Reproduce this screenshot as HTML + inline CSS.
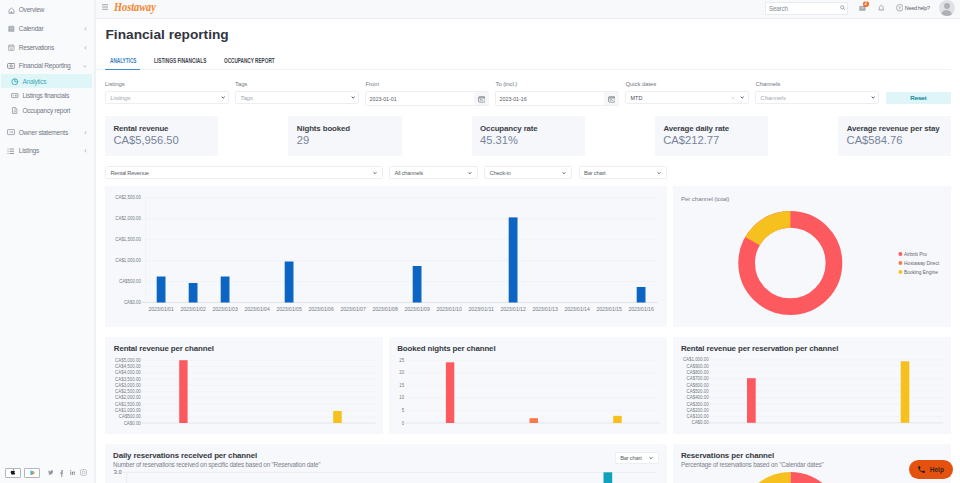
<!DOCTYPE html>
<html><head><meta charset="utf-8">
<style>
*{box-sizing:border-box;margin:0;padding:0}
html,body{width:960px;height:483px;overflow:hidden;background:#fff;font-family:"Liberation Sans",sans-serif;color:#333}
.a{position:absolute}
.t{position:absolute;white-space:nowrap}
/* sidebar */
#sb{left:0;top:0;width:96px;height:483px;background:#f9fafc;border-right:2px solid #f0f1f4}
.si{position:absolute;left:0;width:95px;height:14px;line-height:14px;font-size:6.6px;letter-spacing:-.27px;color:#727884}
.si span{position:absolute;left:18.75px}
.si.sub span{left:22.4px}
.si svg{position:absolute}
.chev{position:absolute;left:83px;font-size:6px;color:#9aa0a8}
/* header */
#hd{left:96px;top:0;width:864px;height:19px;background:#f8f9fb;border-bottom:1px solid #eceef2}
/* inputs */
.lbl{position:absolute;font-size:6px;letter-spacing:-.1px;color:#747983;line-height:8px;height:8px}
.inp{position:absolute;top:91px;height:13.5px;background:#fff;border:1px solid #e8ebf1;border-radius:1.5px}
.ph{position:absolute;font-size:6.2px;letter-spacing:-.1px;color:#a3a7af;font-style:italic}
.dd{position:absolute;right:5px;top:4px;width:4px;height:4px}
.card{position:absolute;top:116px;width:113.3px;height:40px;background:#f6f7fb}
.card .ct{position:absolute;left:8.5px;top:8.2px;font-size:7.9px;letter-spacing:-.12px;font-weight:bold;color:#3b3e46;line-height:10px;white-space:nowrap}
.card .cv{position:absolute;left:8.4px;top:17px;font-size:11.2px;color:#76839a;line-height:14px;white-space:nowrap}
.sel{position:absolute;top:166px;height:12.7px;background:#fff;border:1px solid #eceef3;border-radius:1.5px}
.sel span{position:absolute;left:4.6px;top:.6px;line-height:10.5px;font-size:5.8px;letter-spacing:-.24px;color:#5a5f68;white-space:nowrap}
.pan{position:absolute;background:#f7f8fc}
.ptl{position:absolute;font-size:7.6px;font-weight:bold;color:#353841;line-height:10px;white-space:nowrap}
.ax{font-size:4.4px;color:#6e737c;position:absolute;white-space:nowrap;line-height:6px}
</style></head><body>

<!-- SIDEBAR -->
<div id="sb" class="a">
  <div class="si" style="top:3.1px">
    <svg style="left:7.8px;top:4px" width="7" height="7" viewBox="0 0 14 14"><path d="M2 6.5 L7 2 L12 6.5 V12.5 H2 Z" fill="none" stroke="#7d838c" stroke-width="1.4" stroke-linejoin="round"/><path d="M6 12.5v-3h2v3" fill="none" stroke="#7d838c" stroke-width="1.2"/></svg>
    <span>Overview</span></div>
  <div class="si" style="top:21.7px">
    <svg style="left:8.2px;top:3.4px" width="6.6" height="7" viewBox="0 0 13 14"><rect x="0.5" y="2.5" width="12" height="11" rx="1" fill="#a3a8b0"/><path d="M4.5 2.5v11M8.5 2.5v11M.5 7h12" stroke="#d3d6db" stroke-width=".9"/><rect x="2.8" y="0.5" width="1.6" height="3" fill="#a3a8b0"/><rect x="8.6" y="0.5" width="1.6" height="3" fill="#a3a8b0"/></svg>
    <span>Calendar</span><svg class="chev" style="left:83.6px;top:5.3px" width="3" height="3.6" viewBox="0 0 6 7"><path d="M4.8 .8L1.6 3.5l3.2 2.7" fill="none" stroke="#8a9099" stroke-width="1.1"/></svg></div>
  <div class="si" style="top:40.8px">
    <svg style="left:8.2px;top:2.8px" width="6.6" height="7" viewBox="0 0 13 14"><rect x="1" y="2.5" width="11" height="10.5" rx="1" fill="none" stroke="#9a9fa7" stroke-width="1.4"/><path d="M1 5.5h11M3.8 .5v3.5M9.2 .5v3.5" stroke="#9a9fa7" stroke-width="1.4"/><path d="M4.5 8h4v3h-4z" fill="none" stroke="#9a9fa7" stroke-width="1"/></svg>
    <span>Reservations</span><svg class="chev" style="left:83.6px;top:5.3px" width="3" height="3.6" viewBox="0 0 6 7"><path d="M4.8 .8L1.6 3.5l3.2 2.7" fill="none" stroke="#8a9099" stroke-width="1.1"/></svg></div>
  <div class="si" style="top:59.3px">
    <svg style="left:6.7px;top:4.1px" width="8.4" height="5.8" viewBox="0 0 17 12"><rect x="1" y="1" width="15" height="10" rx="2" fill="none" stroke="#7b818a" stroke-width="1.8"/><circle cx="8.5" cy="6" r="2.4" fill="none" stroke="#7b818a" stroke-width="1.6"/><path d="M3.8 6h.8M12.4 6h.8" stroke="#7b818a" stroke-width="1.6"/></svg>
    <span>Financial Reporting</span><svg class="chev" style="left:83px;top:5.8px" width="3.6" height="3" viewBox="0 0 7 6"><path d="M.8 1.2l2.7 3.2 2.7-3.2" fill="none" stroke="#8a9099" stroke-width="1.1"/></svg></div>
  <div class="a" style="left:1px;top:73.8px;width:91px;height:14.6px;background:#dff6f9"></div>
  <div class="si sub" style="top:74.6px;color:#46abb9">
    <svg style="left:11.2px;top:3.2px" width="7.6" height="7.6" viewBox="0 0 14 14"><circle cx="7" cy="7" r="5.5" fill="none" stroke="#3aa8b8" stroke-width="1.6"/><path d="M7 1.5V7h5.5" fill="none" stroke="#3aa8b8" stroke-width="1.6"/></svg>
    <span>Analytics</span></div>
  <div class="si sub" style="top:89.1px">
    <svg style="left:11.2px;top:4.4px" width="7.6" height="5.2" viewBox="0 0 15 10"><rect x="1" y="1" width="13" height="8" rx="1" fill="none" stroke="#8d939b" stroke-width="1.5"/><path d="M3.5 5h2.5M9 3.5v3" stroke="#8d939b" stroke-width="1.4"/><circle cx="10.5" cy="5" r="1.4" fill="none" stroke="#8d939b" stroke-width="1"/></svg>
    <span>Listings financials</span></div>
  <div class="si sub" style="top:103.8px">
    <svg style="left:12.2px;top:3.1px" width="5.4" height="7" viewBox="0 0 11 14"><path d="M1 1h5.5L10 4.5V13H1z" fill="none" stroke="#8d939b" stroke-width="1.5" stroke-linejoin="round"/><path d="M6.5 1v3.5H10" fill="none" stroke="#8d939b" stroke-width="1.2"/><circle cx="5.5" cy="8.8" r="1.8" fill="none" stroke="#8d939b" stroke-width="1.1"/></svg>
    <span>Occupancy report</span></div>
  <div class="si" style="top:125.5px">
    <svg style="left:7px;top:3.9px" width="8" height="6.2" viewBox="0 0 16 12"><rect x="1" y="1" width="14" height="10" rx="1" fill="none" stroke="#8d939b" stroke-width="1.5"/><path d="M4.5 6h7M9.5 4l2 2-2 2" fill="none" stroke="#8d939b" stroke-width="1.2"/></svg>
    <span>Owner statements</span><svg class="chev" style="left:83.6px;top:5.3px" width="3" height="3.6" viewBox="0 0 6 7"><path d="M4.8 .8L1.6 3.5l3.2 2.7" fill="none" stroke="#8a9099" stroke-width="1.1"/></svg></div>
  <div class="si" style="top:144.2px">
    <svg style="left:7.3px;top:3.8px" width="7.5" height="6.5" viewBox="0 0 15 13"><path d="M1 2h2M5 2h9M1 6.5h2M5 6.5h9M1 11h2M5 11h9" stroke="#7d838c" stroke-width="1.6"/></svg>
    <span>Listings</span><svg class="chev" style="left:83.6px;top:5.3px" width="3" height="3.6" viewBox="0 0 6 7"><path d="M4.8 .8L1.6 3.5l3.2 2.7" fill="none" stroke="#8a9099" stroke-width="1.1"/></svg></div>

  <!-- bottom app buttons -->
  <div class="a" style="left:4.7px;top:468.3px;width:16.3px;height:9.4px;border:1px solid #b3b7bd;border-radius:1px;background:#fff"></div>
  <svg class="a" style="left:9.9px;top:469.4px" width="6.2" height="6.4" viewBox="0 0 10 12"><path d="M7.5 6.3c0-1.4 1.1-2 1.2-2.1-.7-1-1.7-1.1-2-1.1-.9-.1-1.7.5-2.1.5-.5 0-1.1-.5-1.8-.5C1.8 3.1.5 4 .5 6c0 1.2.5 2.6 1.1 3.4.5.7 1 1.4 1.7 1.4.6 0 .9-.4 1.7-.4s1 .4 1.7.4 1.2-.7 1.6-1.3c.5-.7.7-1.4.7-1.4s-1.5-.6-1.5-1.8zM6.2 2c.4-.5.6-1.1.6-1.7-.5 0-1.2.4-1.6.8-.3.4-.6 1-.5 1.6.6.1 1.1-.3 1.5-.7z" fill="#1a1a1a"/></svg>
  <div class="a" style="left:24px;top:468.3px;width:16.2px;height:9.4px;border:1px solid #b3b7bd;border-radius:1px;background:#fff"></div>
  <svg class="a" style="left:30px;top:470px" width="5" height="5.5" viewBox="0 0 10 11"><path d="M1 .5L6.5 5.5 1 10.5z" fill="#2fb4e6"/><path d="M1 .5l5.5 5 2-1.8z" fill="#34c36c"/><path d="M1 10.5l5.5-5 2 1.8z" fill="#ea4335"/><path d="M6.5 5.5l2-1.8L10 5.5 8.5 7.3z" fill="#fbbc04"/></svg>
  <svg class="a" style="left:47.5px;top:470px" width="5.5" height="5" viewBox="0 0 24 20"><path d="M24 2.4c-.9.4-1.8.6-2.8.8 1-.6 1.8-1.6 2.2-2.7-1 .6-2 1-3.1 1.2C19.3.7 18 0 16.6 0c-2.7 0-4.9 2.2-4.9 4.9 0 .4 0 .8.1 1.1C7.7 5.8 4.1 3.9 1.7.9c-.4.7-.7 1.6-.7 2.5 0 1.7.9 3.2 2.2 4.1-.8 0-1.6-.2-2.2-.6v.1c0 2.4 1.7 4.4 3.9 4.8-.4.1-.8.2-1.3.2-.3 0-.6 0-.9-.1.6 2 2.4 3.4 4.6 3.4-1.7 1.3-3.8 2.1-6.1 2.1-.4 0-.8 0-1.2-.1 2.2 1.4 4.8 2.2 7.5 2.2 9.1 0 14-7.5 14-14v-.6c1-.7 1.8-1.6 2.5-2.5z" fill="#8f96a0"/></svg>
  <svg class="a" style="left:59.6px;top:469.8px" width="3.6" height="6.8" viewBox="0 0 10 20"><path d="M6.5 20V11h3l.5-3.5H6.5V5.3c0-1 .3-1.7 1.8-1.7H10V.5C9.6.4 8.6.3 7.4.3 4.9.3 3.2 1.8 3.2 4.6v2.9H.3V11h2.9v9z" fill="#8f96a0"/></svg>
  <svg class="a" style="left:69.8px;top:470px" width="5.5" height="5" viewBox="0 0 20 19"><path d="M.4 6.2h4.1V19H.4zM2.4 0C3.8 0 4.8 1 4.8 2.4S3.8 4.7 2.4 4.7 0 3.7 0 2.4 1.1 0 2.4 0zM7.1 6.2h3.9V8h.1c.5-1 1.9-2.1 3.8-2.1 4.1 0 4.9 2.7 4.9 6.2V19h-4v-6.2c0-1.5 0-3.4-2.1-3.4s-2.4 1.6-2.4 3.3V19h-4z" fill="#8f96a0"/></svg>
  <svg class="a" style="left:80.3px;top:469.4px" width="7" height="7" viewBox="0 0 20 20"><rect x="1.5" y="1.5" width="17" height="17" rx="4.5" fill="none" stroke="#b4bac2" stroke-width="2.2"/><circle cx="10" cy="10" r="4" fill="none" stroke="#b4bac2" stroke-width="2.2"/></svg>
</div>

<!-- HEADER -->
<div id="hd" class="a"></div>
<svg class="a" style="left:102px;top:4.3px" width="6.2" height="6" viewBox="0 0 6.2 6"><path d="M0 .7h6.2M0 3h6.2M0 5.3h6.2" stroke="#7b8088" stroke-width=".7"/></svg>
<div class="t" style="left:114px;top:-1px;line-height:16px;font-family:'Liberation Serif',serif;font-style:italic;font-weight:bold;font-size:11.8px;color:#f5842f;transform-origin:0 0;transform:scaleX(.875)">Hostaway</div>
<div class="a" style="left:765px;top:1.9px;width:83.4px;height:12.8px;background:#fff;border:1px solid #e8ebf0;border-radius:1px"></div>
<div class="t" style="left:768.9px;top:2.6px;line-height:12.3px;font-size:6.3px;letter-spacing:-.17px;color:#858a93">Search</div>
<svg class="a" style="left:839.5px;top:5.3px" width="5.5" height="5.5" viewBox="0 0 11 11"><circle cx="4.5" cy="4.5" r="3.2" fill="none" stroke="#6e737b" stroke-width="1.2"/><path d="M6.9 6.9l3 3" stroke="#6e737b" stroke-width="1.3"/></svg>
<svg class="a" style="left:859px;top:4.5px" width="7" height="6" viewBox="0 0 14 12"><rect x="0.5" y="2" width="12.5" height="9.5" rx="1" fill="#a3a9b2"/><path d="M2.5 5h8M2.5 7.5h8" stroke="#dfe2e6" stroke-width=".9"/></svg>
<div class="a" style="left:862.8px;top:1px;width:6.2px;height:6.2px;border-radius:50%;background:#f26a25"></div>
<div class="t" style="left:862.8px;top:1px;width:6.2px;text-align:center;line-height:6.2px;font-size:4.6px;color:#fff;font-weight:bold">2</div>
<svg class="a" style="left:877.5px;top:4.6px" width="6.5" height="6" viewBox="0 0 13 12"><path d="M6.5 1.2c-2.2 0-3.6 1.6-3.6 3.8v2.8L1.3 9.8h10.4L10.1 7.8V5c0-2.2-1.4-3.8-3.6-3.8z" fill="none" stroke="#80858d" stroke-width="1.2" stroke-linejoin="round"/><path d="M5.2 10.6c.3.5.7.8 1.3.8s1-.3 1.3-.8" stroke="#80858d" stroke-width="1" fill="none"/></svg>
<svg class="a" style="left:895.6px;top:4.4px" width="7.6" height="7.6" viewBox="0 0 16 16"><circle cx="8" cy="8" r="7" fill="none" stroke="#7f848c" stroke-width="1.3"/><path d="M5.7 5c.6 1.4 1.4 2.4 2.3 3.2.9-.8 1.7-1.8 2.3-3.2M8 8.2v3.6" fill="none" stroke="#7f848c" stroke-width="1.2"/></svg>
<div class="t" style="left:904.8px;top:2.4px;line-height:12.3px;font-size:5.4px;letter-spacing:-.27px;color:#5d626b">Need help?</div>
<div class="a" style="left:938.5px;top:0.3px;width:16px;height:16px;border-radius:50%;background:#dfe1e4;overflow:hidden">
  <div class="a" style="left:5px;top:3.2px;width:6px;height:6px;border-radius:50%;background:#adb1b6"></div>
  <div class="a" style="left:2.2px;top:10px;width:11.6px;height:8px;border-radius:6px 6px 0 0;background:#adb1b6"></div>
</div>

<!-- TITLE & TABS -->
<div class="t" style="left:105.5px;top:27.2px;line-height:16px;font-size:13.7px;font-weight:bold;color:#32343d">Financial reporting</div>
<div class="t" style="left:109.5px;top:56.5px;line-height:8px;font-size:6.3px;font-weight:bold;color:#3a82bd;transform-origin:0 0;transform:scaleX(.745)">ANALYTICS</div>
<div class="t" style="left:153.8px;top:56.5px;line-height:8px;font-size:6.3px;font-weight:bold;color:#40434b;transform-origin:0 0;transform:scaleX(.76)">LISTINGS FINANCIALS</div>
<div class="t" style="left:223.8px;top:56.5px;line-height:8px;font-size:6.3px;font-weight:bold;color:#40434b;transform-origin:0 0;transform:scaleX(.745)">OCCUPANCY REPORT</div>
<div class="a" style="left:96px;top:69.2px;width:855px;height:1px;background:#f0f2f5"></div>
<div class="a" style="left:105px;top:69px;width:35.3px;height:1px;background:#3f89c8"></div>

<!-- FILTERS -->
<div class="lbl" style="left:105px;top:80px">Listings</div>
<div class="lbl" style="left:235px;top:80px">Tags</div>
<div class="lbl" style="left:365.5px;top:80px">From</div>
<div class="lbl" style="left:495.5px;top:80px">To (incl.)</div>
<div class="lbl" style="left:625.5px;top:80px">Quick dates</div>
<div class="lbl" style="left:755.5px;top:80px">Channels</div>
<div class="a" style="left:105px;top:91.2px;width:124.3px;height:12.8px;background:#fff;border:1px solid #eceef3;border-radius:1.5px"></div>
<div class="t ph" style="left:110.3px;top:92px;line-height:12.3px">Listings</div>
<svg class="a" style="left:221.00px;top:96.00px" width="4.4" height="3.2" viewBox="0 0 11 8"><path d="M1.8 1.8l3.7 3.6 3.7-3.6" fill="none" stroke="#2c3240" stroke-width="2.1"/></svg>
<div class="a" style="left:235px;top:91.2px;width:124.3px;height:12.8px;background:#fff;border:1px solid #eceef3;border-radius:1.5px"></div>
<div class="t ph" style="left:240.3px;top:92px;line-height:12.3px">Tags</div>
<svg class="a" style="left:351.00px;top:96.00px" width="4.4" height="3.2" viewBox="0 0 11 8"><path d="M1.8 1.8l3.7 3.6 3.7-3.6" fill="none" stroke="#2c3240" stroke-width="2.1"/></svg>
<div class="a" style="left:755px;top:91.2px;width:124.3px;height:12.8px;background:#fff;border:1px solid #eceef3;border-radius:1.5px"></div>
<div class="t ph" style="left:760.3px;top:92px;line-height:12.3px">Channels</div>
<svg class="a" style="left:871.00px;top:96.00px" width="4.4" height="3.2" viewBox="0 0 11 8"><path d="M1.8 1.8l3.7 3.6 3.7-3.6" fill="none" stroke="#2c3240" stroke-width="2.1"/></svg>
<div class="a" style="left:365px;top:91.3px;width:124.3px;height:14.6px;background:#fff;border:1px solid #eceef3;border-radius:1.5px"></div>
<div class="t" style="left:369.6px;top:91.8px;line-height:14.6px;font-size:5.3px;color:#555a62">2023-01-01</div>
<div class="a" style="left:473.8px;top:92.2px;width:15.5px;height:12.7px;background:#f6f7f9"></div><svg class="a" style="left:477.80px;top:95.9px" width="7.6" height="6.8" viewBox="0 0 15 13"><rect x="1" y="1" width="13" height="11" rx="2" fill="none" stroke="#7a7f87" stroke-width="1.4"/><path d="M1 3.5h13" stroke="#7a7f87" stroke-width="2"/><path d="M4.5 10V6.5h3M7.5 8.5h3" stroke="#7a7f87" stroke-width="1.3" fill="none"/></svg>
<div class="a" style="left:495px;top:91.3px;width:124.3px;height:14.6px;background:#fff;border:1px solid #eceef3;border-radius:1.5px"></div>
<div class="t" style="left:499.6px;top:91.8px;line-height:14.6px;font-size:5.3px;color:#555a62">2023-01-16</div>
<div class="a" style="left:603.8px;top:92.2px;width:15.5px;height:12.7px;background:#f6f7f9"></div><svg class="a" style="left:607.80px;top:95.9px" width="7.6" height="6.8" viewBox="0 0 15 13"><rect x="1" y="1" width="13" height="11" rx="2" fill="none" stroke="#7a7f87" stroke-width="1.4"/><path d="M1 3.5h13" stroke="#7a7f87" stroke-width="2"/><path d="M4.5 10V6.5h3M7.5 8.5h3" stroke="#7a7f87" stroke-width="1.3" fill="none"/></svg>
<div class="a" style="left:625px;top:91.2px;width:124.3px;height:12.8px;background:#fff;border:1px solid #eceef3;border-radius:1.5px"></div>
<div class="t" style="left:630.6px;top:92px;line-height:12.3px;font-size:5.4px;color:#4a4e56">MTD</div>
<svg class="a" style="left:731.4px;top:95.7px" width="4" height="4" viewBox="0 0 8 8"><path d="M1 1l6 6M7 1L1 7" stroke="#c9ccd2" stroke-width="1"/></svg>
<svg class="a" style="left:740.40px;top:96.00px" width="4.4" height="3.2" viewBox="0 0 11 8"><path d="M1.8 1.8l3.7 3.6 3.7-3.6" fill="none" stroke="#2c3240" stroke-width="2.1"/></svg>
<div class="a" style="left:885.6px;top:91.5px;width:65.5px;height:12.5px;background:#dff5f7;border-radius:1px"></div>
<div class="t" style="left:885.6px;top:91.5px;width:65.5px;text-align:center;line-height:12.5px;font-size:6.2px;color:#1f8ca3;text-shadow:0 0 .3px #1f8ca3">Reset</div>

<!-- CARDS -->
<div class="card" style="left:105px"><div class="ct">Rental revenue</div><div class="cv">CA$5,956.50</div></div>
<div class="card" style="left:288.3px"><div class="ct">Nights booked</div><div class="cv">29</div></div>
<div class="card" style="left:471.6px"><div class="ct">Occupancy rate</div><div class="cv">45.31%</div></div>
<div class="card" style="left:654.9px"><div class="ct">Average daily rate</div><div class="cv">CA$212.77</div></div>
<div class="card" style="left:838.2px"><div class="ct">Average revenue per stay</div><div class="cv">CA$584.76</div></div>

<!-- CHART SELECTS -->
<div class="sel" style="left:105px;width:277.5px"><span>Rental Revenue</span><svg class="dd" style="top:3.5px" viewBox="0 0 8 8"><path d="M1.2 2.6l2.8 2.8 2.8-2.8" fill="none" stroke="#3a3f4a" stroke-width="1.7"/></svg></div>
<div class="sel" style="left:389px;width:88.5px"><span>All channels</span><svg class="dd" style="top:3.5px" viewBox="0 0 8 8"><path d="M1.2 2.6l2.8 2.8 2.8-2.8" fill="none" stroke="#3a3f4a" stroke-width="1.7"/></svg></div>
<div class="sel" style="left:484px;width:88px"><span>Check-in</span><svg class="dd" style="top:3.5px" viewBox="0 0 8 8"><path d="M1.2 2.6l2.8 2.8 2.8-2.8" fill="none" stroke="#3a3f4a" stroke-width="1.7"/></svg></div>
<div class="sel" style="left:578.5px;width:88.5px"><span>Bar chart</span><svg class="dd" style="top:3.5px" viewBox="0 0 8 8"><path d="M1.2 2.6l2.8 2.8 2.8-2.8" fill="none" stroke="#3a3f4a" stroke-width="1.7"/></svg></div>

<!-- MAIN CHART PANEL -->
<div class="pan" style="left:105px;top:185.5px;width:562px;height:141.5px"></div>
<div id="mainchart"></div>

<!-- DONUT PANEL -->
<div class="pan" style="left:673px;top:185.5px;width:278px;height:141.5px"></div>

<!-- ROW 2 -->
<div class="pan" style="left:105px;top:336.5px;width:278px;height:97px"></div>
<div class="pan" style="left:388.5px;top:336.5px;width:278.5px;height:97px"></div>
<div class="pan" style="left:673px;top:336.5px;width:278px;height:97px"></div>

<!-- ROW 3 -->
<div class="pan" style="left:105px;top:443.5px;width:562px;height:40px"></div>
<div class="pan" style="left:673px;top:443.5px;width:278px;height:40px"></div>

<!--CHARTS-->
<svg class="a" style="left:0;top:0" width="960" height="483" viewBox="0 0 960 483" font-family="Liberation Sans, sans-serif">
<line x1="141.5" y1="302.50" x2="657.6" y2="302.50" stroke="#d2d5dc" stroke-width="0.6"/>
<text x="141.00" y="304.00" font-size="5.3" fill="#737881" text-anchor="end" textLength="17.12" lengthAdjust="spacingAndGlyphs">CA$0.00</text>
<line x1="145.5" y1="281.55" x2="657.6" y2="281.55" stroke="#eceef3" stroke-width="0.6"/>
<text x="141.00" y="283.05" font-size="5.3" fill="#737881" text-anchor="end" textLength="22.02" lengthAdjust="spacingAndGlyphs">CA$500.00</text>
<line x1="145.5" y1="260.60" x2="657.6" y2="260.60" stroke="#eceef3" stroke-width="0.6"/>
<text x="141.00" y="262.10" font-size="5.3" fill="#737881" text-anchor="end" textLength="25.69" lengthAdjust="spacingAndGlyphs">CA$1,000.00</text>
<line x1="145.5" y1="239.65" x2="657.6" y2="239.65" stroke="#eceef3" stroke-width="0.6"/>
<text x="141.00" y="241.15" font-size="5.3" fill="#737881" text-anchor="end" textLength="25.69" lengthAdjust="spacingAndGlyphs">CA$1,500.00</text>
<line x1="145.5" y1="218.70" x2="657.6" y2="218.70" stroke="#eceef3" stroke-width="0.6"/>
<text x="141.00" y="220.20" font-size="5.3" fill="#737881" text-anchor="end" textLength="25.69" lengthAdjust="spacingAndGlyphs">CA$2,000.00</text>
<line x1="145.5" y1="197.75" x2="657.6" y2="197.75" stroke="#eceef3" stroke-width="0.6"/>
<text x="141.00" y="199.25" font-size="5.3" fill="#737881" text-anchor="end" textLength="25.69" lengthAdjust="spacingAndGlyphs">CA$2,500.00</text>
<line x1="145.5" y1="197.75" x2="145.5" y2="302.50" stroke="#eceef3" stroke-width="0.6"/>
<rect x="156.70" y="276.5" width="8.8" height="26.00" fill="#0c65c2"/>
<text x="161.10" y="311.40" font-size="5.3" fill="#737881" text-anchor="middle" textLength="25.30" lengthAdjust="spacingAndGlyphs">2023/01/01</text>
<rect x="188.70" y="283" width="8.8" height="19.50" fill="#0c65c2"/>
<text x="193.10" y="311.40" font-size="5.3" fill="#737881" text-anchor="middle" textLength="25.30" lengthAdjust="spacingAndGlyphs">2023/01/02</text>
<rect x="220.70" y="276.5" width="8.8" height="26.00" fill="#0c65c2"/>
<text x="225.10" y="311.40" font-size="5.3" fill="#737881" text-anchor="middle" textLength="25.30" lengthAdjust="spacingAndGlyphs">2023/01/03</text>
<text x="257.10" y="311.40" font-size="5.3" fill="#737881" text-anchor="middle" textLength="25.30" lengthAdjust="spacingAndGlyphs">2023/01/04</text>
<rect x="284.70" y="261.5" width="8.8" height="41.00" fill="#0c65c2"/>
<text x="289.10" y="311.40" font-size="5.3" fill="#737881" text-anchor="middle" textLength="25.30" lengthAdjust="spacingAndGlyphs">2023/01/05</text>
<text x="321.10" y="311.40" font-size="5.3" fill="#737881" text-anchor="middle" textLength="25.30" lengthAdjust="spacingAndGlyphs">2023/01/06</text>
<text x="353.10" y="311.40" font-size="5.3" fill="#737881" text-anchor="middle" textLength="25.30" lengthAdjust="spacingAndGlyphs">2023/01/07</text>
<text x="385.10" y="311.40" font-size="5.3" fill="#737881" text-anchor="middle" textLength="25.30" lengthAdjust="spacingAndGlyphs">2023/01/08</text>
<rect x="412.70" y="266" width="8.8" height="36.50" fill="#0c65c2"/>
<text x="417.10" y="311.40" font-size="5.3" fill="#737881" text-anchor="middle" textLength="25.30" lengthAdjust="spacingAndGlyphs">2023/01/09</text>
<text x="449.10" y="311.40" font-size="5.3" fill="#737881" text-anchor="middle" textLength="25.30" lengthAdjust="spacingAndGlyphs">2023/01/10</text>
<text x="481.10" y="311.40" font-size="5.3" fill="#737881" text-anchor="middle" textLength="25.30" lengthAdjust="spacingAndGlyphs">2023/01/11</text>
<rect x="508.70" y="217.4" width="8.8" height="85.10" fill="#0c65c2"/>
<text x="513.10" y="311.40" font-size="5.3" fill="#737881" text-anchor="middle" textLength="25.30" lengthAdjust="spacingAndGlyphs">2023/01/12</text>
<text x="545.10" y="311.40" font-size="5.3" fill="#737881" text-anchor="middle" textLength="25.30" lengthAdjust="spacingAndGlyphs">2023/01/13</text>
<text x="577.10" y="311.40" font-size="5.3" fill="#737881" text-anchor="middle" textLength="25.30" lengthAdjust="spacingAndGlyphs">2023/01/14</text>
<text x="609.10" y="311.40" font-size="5.3" fill="#737881" text-anchor="middle" textLength="25.30" lengthAdjust="spacingAndGlyphs">2023/01/15</text>
<rect x="636.70" y="287" width="8.8" height="15.50" fill="#0c65c2"/>
<text x="641.10" y="311.40" font-size="5.3" fill="#737881" text-anchor="middle" textLength="25.30" lengthAdjust="spacingAndGlyphs">2023/01/16</text>
<circle cx="790.3" cy="263" r="43.65" fill="none" stroke="#fd5a5f" stroke-width="16.70"/>
<circle cx="790.3" cy="263" r="43.65" fill="none" stroke="#f6c11f" stroke-width="16.70" stroke-dasharray="45.710 274.261" transform="rotate(-150 790.3 263)"/>
<text x="681" y="201.3" font-size="6.2" letter-spacing="-0.12" fill="#7b808a">Per channel (total)</text>
<circle cx="900.4" cy="254" r="1.9" fill="#fd5a5f"/>
<text x="904" y="255.7" font-size="4.85" fill="#5f646d">Airbnb Pro</text>
<circle cx="900.4" cy="263" r="1.9" fill="#f8794a"/>
<text x="904" y="264.7" font-size="4.85" fill="#5f646d">Hostaway Direct</text>
<circle cx="900.4" cy="271.9" r="1.9" fill="#f6c11f"/>
<text x="904" y="273.59999999999997" font-size="4.85" fill="#5f646d">Booking Engine</text>
<text x="113.8" y="351" font-size="7.9" letter-spacing="-0.12" font-weight="bold" fill="#353841">Rental revenue per channel</text>
<line x1="141.5" y1="423.00" x2="375.5" y2="423.00" stroke="#d2d5dc" stroke-width="0.5"/>
<text x="140.80" y="424.60" font-size="5.0" fill="#737881" text-anchor="end" textLength="17.12" lengthAdjust="spacingAndGlyphs">CA$0.00</text>
<line x1="141.5" y1="416.72" x2="375.5" y2="416.72" stroke="#eceef3" stroke-width="0.5"/>
<text x="140.80" y="418.32" font-size="5.0" fill="#737881" text-anchor="end" textLength="22.02" lengthAdjust="spacingAndGlyphs">CA$500.00</text>
<line x1="141.5" y1="410.44" x2="375.5" y2="410.44" stroke="#eceef3" stroke-width="0.5"/>
<text x="140.80" y="412.04" font-size="5.0" fill="#737881" text-anchor="end" textLength="25.69" lengthAdjust="spacingAndGlyphs">CA$1,000.00</text>
<line x1="141.5" y1="404.16" x2="375.5" y2="404.16" stroke="#eceef3" stroke-width="0.5"/>
<text x="140.80" y="405.76" font-size="5.0" fill="#737881" text-anchor="end" textLength="25.69" lengthAdjust="spacingAndGlyphs">CA$1,500.00</text>
<line x1="141.5" y1="397.88" x2="375.5" y2="397.88" stroke="#eceef3" stroke-width="0.5"/>
<text x="140.80" y="399.48" font-size="5.0" fill="#737881" text-anchor="end" textLength="25.69" lengthAdjust="spacingAndGlyphs">CA$2,000.00</text>
<line x1="141.5" y1="391.60" x2="375.5" y2="391.60" stroke="#eceef3" stroke-width="0.5"/>
<text x="140.80" y="393.20" font-size="5.0" fill="#737881" text-anchor="end" textLength="25.69" lengthAdjust="spacingAndGlyphs">CA$2,500.00</text>
<line x1="141.5" y1="385.32" x2="375.5" y2="385.32" stroke="#eceef3" stroke-width="0.5"/>
<text x="140.80" y="386.92" font-size="5.0" fill="#737881" text-anchor="end" textLength="25.69" lengthAdjust="spacingAndGlyphs">CA$3,000.00</text>
<line x1="141.5" y1="379.04" x2="375.5" y2="379.04" stroke="#eceef3" stroke-width="0.5"/>
<text x="140.80" y="380.64" font-size="5.0" fill="#737881" text-anchor="end" textLength="25.69" lengthAdjust="spacingAndGlyphs">CA$3,500.00</text>
<line x1="141.5" y1="372.76" x2="375.5" y2="372.76" stroke="#eceef3" stroke-width="0.5"/>
<text x="140.80" y="374.36" font-size="5.0" fill="#737881" text-anchor="end" textLength="25.69" lengthAdjust="spacingAndGlyphs">CA$4,000.00</text>
<line x1="141.5" y1="366.48" x2="375.5" y2="366.48" stroke="#eceef3" stroke-width="0.5"/>
<text x="140.80" y="368.08" font-size="5.0" fill="#737881" text-anchor="end" textLength="25.69" lengthAdjust="spacingAndGlyphs">CA$4,500.00</text>
<line x1="141.5" y1="360.20" x2="375.5" y2="360.20" stroke="#eceef3" stroke-width="0.5"/>
<text x="140.80" y="361.80" font-size="5.0" fill="#737881" text-anchor="end" textLength="25.69" lengthAdjust="spacingAndGlyphs">CA$5,000.00</text>
<rect x="179.2" y="360.2" width="8.40" height="62.80" fill="#fd5a5f"/>
<rect x="333.2" y="411" width="8.50" height="12.00" fill="#f6c11f"/>
<text x="397.2" y="351" font-size="7.9" letter-spacing="-0.12" font-weight="bold" fill="#353841">Booked nights per channel</text>
<line x1="405.7" y1="423.00" x2="659.5" y2="423.00" stroke="#d2d5dc" stroke-width="0.5"/>
<text x="404.20" y="424.60" font-size="5.0" fill="#737881" text-anchor="end" textLength="2.45" lengthAdjust="spacingAndGlyphs">0</text>
<line x1="405.7" y1="410.44" x2="659.5" y2="410.44" stroke="#eceef3" stroke-width="0.5"/>
<text x="404.20" y="412.04" font-size="5.0" fill="#737881" text-anchor="end" textLength="2.45" lengthAdjust="spacingAndGlyphs">5</text>
<line x1="405.7" y1="397.88" x2="659.5" y2="397.88" stroke="#eceef3" stroke-width="0.5"/>
<text x="404.20" y="399.48" font-size="5.0" fill="#737881" text-anchor="end" textLength="4.89" lengthAdjust="spacingAndGlyphs">10</text>
<line x1="405.7" y1="385.32" x2="659.5" y2="385.32" stroke="#eceef3" stroke-width="0.5"/>
<text x="404.20" y="386.92" font-size="5.0" fill="#737881" text-anchor="end" textLength="4.89" lengthAdjust="spacingAndGlyphs">15</text>
<line x1="405.7" y1="372.76" x2="659.5" y2="372.76" stroke="#eceef3" stroke-width="0.5"/>
<text x="404.20" y="374.36" font-size="5.0" fill="#737881" text-anchor="end" textLength="4.89" lengthAdjust="spacingAndGlyphs">20</text>
<line x1="405.7" y1="360.20" x2="659.5" y2="360.20" stroke="#eceef3" stroke-width="0.5"/>
<text x="404.20" y="361.80" font-size="5.0" fill="#737881" text-anchor="end" textLength="4.89" lengthAdjust="spacingAndGlyphs">25</text>
<rect x="445.9" y="362.3" width="8.40" height="60.70" fill="#fd5a5f"/>
<rect x="529.5" y="418.2" width="8.50" height="4.80" fill="#f8794a"/>
<rect x="613.2" y="415.8" width="8.50" height="7.20" fill="#f6c11f"/>
<text x="681" y="351" font-size="7.9" letter-spacing="-0.12" font-weight="bold" fill="#353841">Rental revenue per reservation per channel</text>
<line x1="709" y1="422.80" x2="943.1" y2="422.80" stroke="#d2d5dc" stroke-width="0.5"/>
<text x="708.60" y="424.40" font-size="5.0" fill="#737881" text-anchor="end" textLength="17.12" lengthAdjust="spacingAndGlyphs">CA$0.00</text>
<line x1="709" y1="416.50" x2="943.1" y2="416.50" stroke="#eceef3" stroke-width="0.5"/>
<text x="708.60" y="418.10" font-size="5.0" fill="#737881" text-anchor="end" textLength="22.02" lengthAdjust="spacingAndGlyphs">CA$100.00</text>
<line x1="709" y1="410.20" x2="943.1" y2="410.20" stroke="#eceef3" stroke-width="0.5"/>
<text x="708.60" y="411.80" font-size="5.0" fill="#737881" text-anchor="end" textLength="22.02" lengthAdjust="spacingAndGlyphs">CA$200.00</text>
<line x1="709" y1="403.90" x2="943.1" y2="403.90" stroke="#eceef3" stroke-width="0.5"/>
<text x="708.60" y="405.50" font-size="5.0" fill="#737881" text-anchor="end" textLength="22.02" lengthAdjust="spacingAndGlyphs">CA$300.00</text>
<line x1="709" y1="397.60" x2="943.1" y2="397.60" stroke="#eceef3" stroke-width="0.5"/>
<text x="708.60" y="399.20" font-size="5.0" fill="#737881" text-anchor="end" textLength="22.02" lengthAdjust="spacingAndGlyphs">CA$400.00</text>
<line x1="709" y1="391.30" x2="943.1" y2="391.30" stroke="#eceef3" stroke-width="0.5"/>
<text x="708.60" y="392.90" font-size="5.0" fill="#737881" text-anchor="end" textLength="22.02" lengthAdjust="spacingAndGlyphs">CA$500.00</text>
<line x1="709" y1="385.00" x2="943.1" y2="385.00" stroke="#eceef3" stroke-width="0.5"/>
<text x="708.60" y="386.60" font-size="5.0" fill="#737881" text-anchor="end" textLength="22.02" lengthAdjust="spacingAndGlyphs">CA$600.00</text>
<line x1="709" y1="378.70" x2="943.1" y2="378.70" stroke="#eceef3" stroke-width="0.5"/>
<text x="708.60" y="380.30" font-size="5.0" fill="#737881" text-anchor="end" textLength="22.02" lengthAdjust="spacingAndGlyphs">CA$700.00</text>
<line x1="709" y1="372.40" x2="943.1" y2="372.40" stroke="#eceef3" stroke-width="0.5"/>
<text x="708.60" y="374.00" font-size="5.0" fill="#737881" text-anchor="end" textLength="22.02" lengthAdjust="spacingAndGlyphs">CA$800.00</text>
<line x1="709" y1="366.10" x2="943.1" y2="366.10" stroke="#eceef3" stroke-width="0.5"/>
<text x="708.60" y="367.70" font-size="5.0" fill="#737881" text-anchor="end" textLength="22.02" lengthAdjust="spacingAndGlyphs">CA$900.00</text>
<line x1="709" y1="359.80" x2="943.1" y2="359.80" stroke="#eceef3" stroke-width="0.5"/>
<text x="708.60" y="361.40" font-size="5.0" fill="#737881" text-anchor="end" textLength="25.69" lengthAdjust="spacingAndGlyphs">CA$1,000.00</text>
<rect x="747" y="378.2" width="8.70" height="44.60" fill="#fd5a5f"/>
<rect x="900.7" y="361.3" width="8.60" height="61.50" fill="#f6c11f"/>
<text x="113.1" y="458" font-size="7.9" letter-spacing="-0.12" font-weight="bold" fill="#353841">Daily reservations received per channel</text>
<text x="113.1" y="467.1" font-size="6.3" letter-spacing="-0.18" fill="#7b808a">Number of reservations received on specific dates based on "Reservation date"</text>
<text x="121.5" y="474.1" font-size="5.6" fill="#5a5f68" text-anchor="end">3.0</text>
<line x1="122.8" y1="472.3" x2="657.2" y2="472.3" stroke="#e4e6eb" stroke-width="0.6"/>
<line x1="126.7" y1="472.3" x2="126.7" y2="483" stroke="#e4e6eb" stroke-width="0.6"/>
<rect x="603.5" y="472.3" width="8.70" height="10.70" fill="#11a0bd"/>
<text x="681" y="458" font-size="7.9" letter-spacing="-0.12" font-weight="bold" fill="#353841">Reservations per channel</text>
<text x="681" y="466.9" font-size="6.3" letter-spacing="-0.18" fill="#7b808a">Percentage of reservations based on "Calendar dates"</text>
<path d="M790.4 524.6 V472.1 A52.5 52.5 0 0 1 842.9 524.6 Z" fill="#fd5a5f"/>
<path d="M790.4 524.6 V472.1 A52.5 52.5 0 0 0 737.9 524.6 Z" fill="#f6c11f"/>
</svg>
<!--/CHARTS-->

<!-- ROW3 select + help -->
<div class="sel" style="left:614.6px;top:451.8px;width:44px;height:12.6px"><span>Bar chart</span><svg class="dd" style="top:3.5px" viewBox="0 0 8 8"><path d="M1.2 2.6l2.8 2.8 2.8-2.8" fill="none" stroke="#3a3f4a" stroke-width="1.7"/></svg></div>
<div class="a" style="left:909px;top:460.2px;width:43.6px;height:18.8px;border-radius:9.4px;background:#e5520f"></div>
<svg class="a" style="left:917.3px;top:464.9px" width="9" height="9" viewBox="0 0 24 24"><path d="M6.6 10.8c1.4 2.8 3.8 5.1 6.6 6.6l2.2-2.2c.3-.3.7-.4 1-.2 1.1.4 2.3.6 3.6.6.6 0 1 .4 1 1V20c0 .6-.4 1-1 1C10.6 21 3 13.4 3 4c0-.6.4-1 1-1h3.5c.6 0 1 .4 1 1 0 1.3.2 2.5.6 3.6.1.3 0 .7-.2 1z" fill="#1f1f1f"/></svg>
<div class="t" style="left:929.8px;top:464px;line-height:11px;font-size:6.5px;font-weight:bold;color:#3a2418">Help</div>
</body></html>
